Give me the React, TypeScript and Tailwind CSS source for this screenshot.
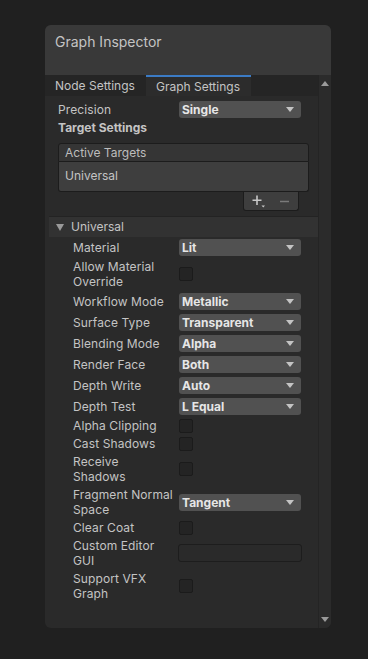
import React from "react";

function Arrow({ className = "" }: { className?: string }) {
  return (
    <svg width="8" height="5" viewBox="0 0 8 5" className={className}>
      <path d="M0 0 L8 0 L4 5 Z" fill="currentColor" />
    </svg>
  );
}

function Dropdown({ value }: { value: string }) {
  return (
    <div className="flex h-[17px] w-[122px] items-center justify-between rounded-[3px] bg-[#515151] pl-[3px] pr-[7px] text-[12px] font-bold leading-[17px] text-[#e6e6e6]">
      <span>{value}</span>
      <Arrow className="text-[#c4c4c4]" />
    </div>
  );
}

function Checkbox() {
  return <div className="h-[14px] w-[14px] rounded-[2px] border border-[#1b1b1b] bg-[#242424]" />;
}

type Field = { label: string[]; kind: "dropdown" | "check" | "text"; value?: string };

const fields: Field[] = [
  { label: ["Material"], kind: "dropdown", value: "Lit" },
  { label: ["Allow Material", "Override"], kind: "check" },
  { label: ["Workflow Mode"], kind: "dropdown", value: "Metallic" },
  { label: ["Surface Type"], kind: "dropdown", value: "Transparent" },
  { label: ["Blending Mode"], kind: "dropdown", value: "Alpha" },
  { label: ["Render Face"], kind: "dropdown", value: "Both" },
  { label: ["Depth Write"], kind: "dropdown", value: "Auto" },
  { label: ["Depth Test"], kind: "dropdown", value: "L Equal" },
  { label: ["Alpha Clipping"], kind: "check" },
  { label: ["Cast Shadows"], kind: "check" },
  { label: ["Receive", "Shadows"], kind: "check" },
  { label: ["Fragment Normal", "Space"], kind: "dropdown", value: "Tangent" },
  { label: ["Clear Coat"], kind: "check" },
  { label: ["Custom Editor", "GUI"], kind: "text" },
  { label: ["Support VFX", "Graph"], kind: "check" },
];

function FieldRow({ field }: { field: Field }) {
  const twoLines = field.label.length === 2;
  const height = twoLines ? "h-[30px]" : field.kind === "check" ? "h-[15px]" : "h-[18px]";
  return (
    <div className={`flex items-center pl-[28px] ${height}`}>
      <div className="w-[106px] whitespace-nowrap text-[12px] leading-[15px] tracking-[0.1px] text-[#c4c4c4]">
        {field.label.map((line) => (
          <div key={line}>{line}</div>
        ))}
      </div>
      {field.kind === "dropdown" ? <Dropdown value={field.value ?? ""} /> : null}
      {field.kind === "check" ? <Checkbox /> : null}
      {field.kind === "text" ? (
        <div className="h-[18px] w-[124px] -ml-px rounded-[3px] border border-[#1d1d1d] bg-[#2a2a2a]" />
      ) : null}
    </div>
  );
}

export default function App() {
  return (
    <div className="h-[659px] w-[368px] bg-[#202020] pl-[45px] pt-[25px] font-[Inter,sans-serif]">
      <div className="flex h-[603px] w-[286px] flex-col overflow-hidden rounded-[6px] bg-[#2a2a2a]">
        <div className="h-[50px] shrink-0 bg-[#393939] pl-[10px] pt-[8px] text-[14px] leading-[18px] text-[#c4c4c4]">
          Graph Inspector
        </div>
        <div className="flex min-h-0 flex-1">
          <div className="flex w-[273px] flex-col">
            <div className="flex h-[21px] shrink-0 bg-[#252525] text-[12px] text-[#c4c4c4]">
              <div className="w-[101px] pl-[10px] leading-[21px]">Node Settings</div>
              <div className="w-[105px] border-t-2 border-[#3b7bc5] bg-[#2c2c2c] pl-[10px] leading-[19px]">
                Graph Settings
              </div>
            </div>

            <div className="flex items-center pl-[13px] pt-[5px]">
              <div className="w-[121px] text-[12px] leading-[17px] tracking-[0.1px] text-[#c4c4c4]">Precision</div>
              <Dropdown value="Single" />
            </div>
            <div className="h-[19px] pl-[13px] text-[12px] font-bold leading-[19px] text-[#c4c4c4]">
              Target Settings
            </div>

            <div className="ml-[13px] mt-[6px] w-[251px]">
              <div className="h-[19px] rounded-t-[3px] border border-[#1c1c1c] bg-[#353535] pl-[6px] text-[12px] leading-[17px] text-[#bdbdbd]">
                Active Targets
              </div>
              <div className="h-[30px] rounded-b-[3px] border-x border-b border-[#1c1c1c] bg-[#3e3e3e] pl-[6px] text-[12px] leading-[28px] text-[#c4c4c4]">
                Universal
              </div>
              <div className="ml-[185px] flex h-[19px] w-[56px] items-center gap-[14px] rounded-b-[3px] border-x border-b border-[#1c1c1c] bg-[#3e3e3e] pl-[8px]">
                <svg width="14" height="13" viewBox="0 0 14 13">
                  <path d="M5 0.5 V10 M0.5 5.2 H9.5" stroke="#c8c8c8" strokeWidth="1.6" />
                  <path d="M9.5 10.5 H13 L11.25 12.5 Z" fill="#c8c8c8" />
                </svg>
                <svg width="9" height="3" viewBox="0 0 9 3">
                  <path d="M0 1.5 H9" stroke="#7a7a7a" strokeWidth="1.6" />
                </svg>
              </div>
            </div>

            <div className="ml-[4px] mt-[5px] flex h-[21px] items-center border-t border-[#232323] bg-[#323232] pl-[7px] text-[12px] text-[#c4c4c4]">
              <svg width="8" height="7" viewBox="0 0 8 7" className="mr-[7px] text-[#9a9a9a]">
                <path d="M0 0 L8 0 L4 7 Z" fill="currentColor" />
              </svg>
              Universal
            </div>

            <div className="mt-px flex flex-col gap-[3px]">
              {fields.map((f) => (
                <FieldRow key={f.label.join(" ")} field={f} />
              ))}
            </div>
          </div>

          <div className="flex w-[13px] flex-col items-center justify-between border-l border-[#242424] bg-[#2b2b2b] pb-[6px] pt-[6px]">
            <Arrow className="rotate-180 text-[#9a9a9a]" />
            <Arrow className="text-[#9a9a9a]" />
          </div>
        </div>
      </div>
    </div>
  );
}
